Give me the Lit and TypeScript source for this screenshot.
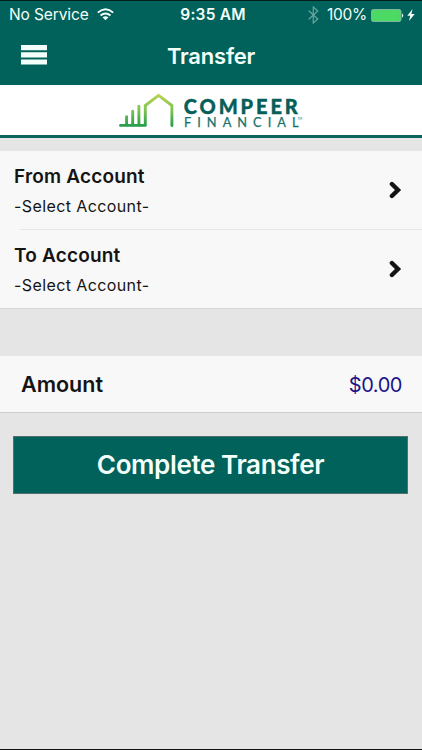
import { LitElement, html, css, svg } from "lit";
import { customElement, property } from "lit/decorators.js";

@customElement("status-bar")
class StatusBar extends LitElement {
  static styles = css`
    :host { display: grid; grid-template-columns: 1fr auto 1fr; align-items: center; height: 28px; padding: 0 7px 0 9px; box-sizing: border-box; color: #f4fffc; font-size: 15.5px; line-height: 28px; white-space: nowrap; }
    .side { display: flex; align-items: center; }
    .carrier { letter-spacing: -0.12px; }
    .wifi { margin-left: 8px; margin-top: -2px; }
    .clock { font-weight: 600; letter-spacing: 0.2px; padding-left: 2px; }
    .right { justify-content: flex-end; }
    .bt { margin-right: 8px; }
    .pct { letter-spacing: -0.25px; }
    .bat { margin-left: 4px; }
    .bolt { margin-left: 3px; }
  `;
  render() {
    return html`
      <div class="side"><span class="carrier">No Service</span>
        <svg class="wifi" width="17" height="13" viewBox="0 0 17 13" fill="none" stroke="#f4fffc" stroke-width="1.9">
          <path d="M.8 4.6Q8.5-2 16.2 4.6M3.5 7.5Q8.5 3.3 13.5 7.5"/><path d="M8.5 12.2L5.5 9.2Q8.5 7.2 11.5 9.2Z" fill="#f4fffc" stroke="none"/>
        </svg></div>
      <span class="clock">9:35 AM</span>
      <div class="side right">
        <svg class="bt" width="11" height="18" viewBox="0 0 11 18" fill="none" stroke="#6ba49e" stroke-width="1.2"><path d="M.7 4.8L9.8 13 5.3 17V1L9.8 5 .7 13.2"/></svg>
        <span class="pct">100%</span>
        <svg class="bat" width="33" height="13" viewBox="0 0 33 13"><rect x=".5" y=".5" width="29.5" height="12" rx="1.8" fill="#4cd964" stroke="#7cb5a1"/><path d="M31 4.2q2.4 2.3 0 4.6z" fill="#f4fffc"/></svg>
        <svg class="bolt" width="8" height="12" viewBox="0 0 8 12"><path d="M5.6 0L.3 6.8h3L2 12l5.7-7.1H4.4z" fill="#f4fffc"/></svg>
      </div>`;
  }
}

@customElement("brand-logo")
class BrandLogo extends LitElement {
  static styles = css`
    :host { display: block; height: 50px; }
    .art { display: block; }
    .name { font: 900 20px Lato, sans-serif; fill: #075f59; stroke: #075f59; stroke-width: 0.4px; }
    .sub { font: 400 12.8px Lato, sans-serif; fill: #16736c; stroke: #16736c; stroke-width: 0.25px; }
    .tm { font: 3px Lato, sans-serif; fill: #16736c; }
  `;
  render() {
    return html`<svg class="art" width="422" height="50" viewBox="0 85 422 50">
      <defs><linearGradient id="leaf" gradientUnits="userSpaceOnUse" x1="0" y1="94" x2="0" y2="127"><stop offset="0" stop-color="#b9d553"/><stop offset=".5" stop-color="#7dc252"/><stop offset="1" stop-color="#219a4b"/></linearGradient></defs>
      ${svg`<g fill="none" stroke="url(#leaf)" stroke-width="2.9" stroke-linecap="round" stroke-linejoin="round"><path d="M120.5 125.4H145.3V105.5L158.6 95.3 171.9 105.5V125.6"/><path d="M126.6 125V116.8M132.7 125V111.2M138.9 125V106.2"/></g>`}
      <text class="name" x="183.8" y="114" textLength="114">COMPEER</text>
      <text class="sub" x="184" y="127.1" textLength="114.5">FINANCIAL</text>
      <text class="tm" x="297.5" y="119.8">TM</text>
    </svg>`;
  }
}

@customElement("account-row")
class AccountRow extends LitElement {
  @property() label = "";
  @property() value = "-Select Account-";
  static styles = css`
    :host { display: flex; justify-content: space-between; align-items: center; height: 79px; padding: 0 20px 0 14px; box-sizing: border-box; color: #141414; }
    .text { padding-bottom: 1px; }
    .label { font-size: 19px; line-height: 24px; font-weight: 600; white-space: nowrap; letter-spacing: 0.18px; }
    .value { font-size: 16px; line-height: 20px; margin-top: 7px; letter-spacing: 0.4px; }
    .chev { display: block; margin-top: -1px; }
  `;
  render() {
    return html`<div class="text"><div class="label">${this.label}</div><div class="value">${this.value}</div></div>
      <svg class="chev" width="13" height="18" viewBox="0 0 13 18"><path d="M2.9 3L9 9 2.9 15" fill="none" stroke="#141414" stroke-width="4.4" stroke-linecap="round" stroke-linejoin="miter"/></svg>`;
  }
}

@customElement("app-root")
class AppRoot extends LitElement {
  static styles = css`
    :host { display: block; height: 750px; box-sizing: border-box; background: #e5e5e5; border-bottom: 1px solid #111; font-family: Inter, "Liberation Sans", sans-serif; overflow: hidden; }
    .header { height: 85px; box-sizing: border-box; background: #00625a; border-top: 1px solid #061f1d; }
    .nav { display: grid; grid-template-columns: 1fr auto 1fr; align-items: center; height: 54px; }
    .menu { margin: -2px 0 0 21px; }
    .title { color: #f4fffc; font-size: 22px; line-height: 28px; font-weight: 600; letter-spacing: -0.2px; }
    .brand { background: #fff; border-bottom: 3px solid #0c625c; }
    .accounts { margin-top: 13px; height: 158px; box-sizing: border-box; background: #f8f8f8; border-bottom: 1px solid #d8d8d8; }
    .rule { height: 1px; margin: -1px 0 0 20px; background: #e5e5e5; }
    .amount { margin-top: 47px; height: 57px; box-sizing: border-box; background: #f8f8f8; border-bottom: 1px solid #cfcfcf; padding: 0 20px 0 21px; display: flex; justify-content: space-between; align-items: center; }
    .label { font-size: 21.5px; font-weight: 600; color: #141414; }
    .money { font-size: 20px; color: #1c1489; letter-spacing: -0.45px; margin-top: 2px; }
    .submit { display: block; width: 395px; height: 58px; margin: 23px 0 0 13px; padding: 0 0 2px; border: 1px solid #53706c; border-radius: 0; background: #00625a; color: #f4fffc; font: 600 26px Inter, sans-serif; letter-spacing: -0.38px; }
  `;
  render() {
    return html`
      <div class="header"><status-bar></status-bar>
        <div class="nav">
          <svg class="menu" width="26" height="20" viewBox="0 0 26 20" fill="#f4fffc"><path d="M0 0h26v5.2H0zM0 7.2h26v5.2H0zM0 14.4h26v5.2H0z"/></svg>
          <span class="title">Transfer</span><span></span>
        </div></div>
      <div class="brand"><brand-logo></brand-logo></div>
      <div class="accounts"><account-row label="From Account"></account-row><div class="rule"></div><account-row label="To Account"></account-row></div>
      <div class="amount"><span class="label">Amount</span><span class="money">$0.00</span></div>
      <button class="submit">Complete Transfer</button>`;
  }
}
